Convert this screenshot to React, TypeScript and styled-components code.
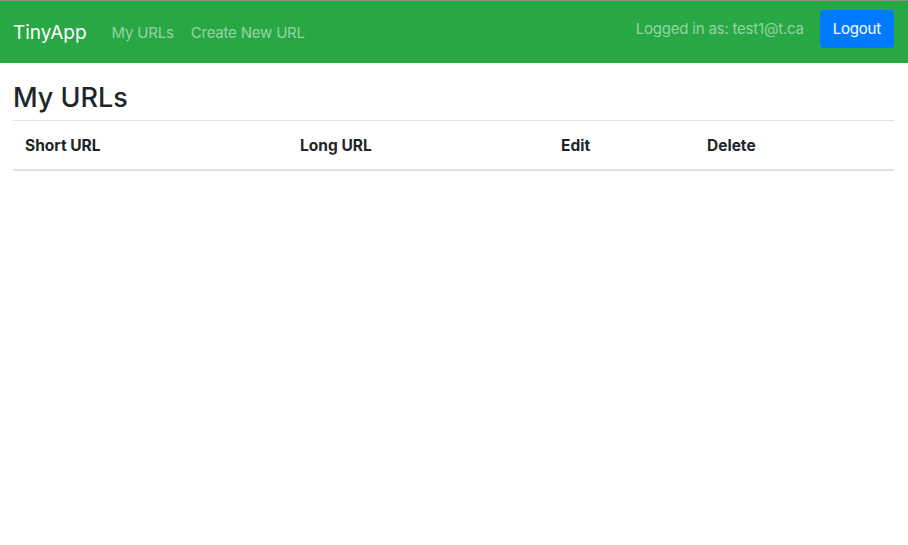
import * as React from "react";
import styled, { createGlobalStyle } from "styled-components";

const GlobalStyle = createGlobalStyle`
  html, body {
    margin: 0;
    padding: 0;
    background: #fff;
  }
  body {
    font-family: Inter, "Liberation Sans", sans-serif;
    color: #212529;
    border-top: 1px solid #8c8c8c;
  }
`;

const Navbar = styled.nav`
  display: flex;
  align-items: center;
  justify-content: space-between;
  height: 62px;
  padding: 0 14px 7px 13px;
  box-sizing: border-box;
  background-color: #28a745;
`;

const Left = styled.div`
  display: flex;
  align-items: center;
  gap: 17px;
  padding-top: 7px;
`;

const Brand = styled.a`
  color: #fff;
  font-size: 19px;
  margin-right: 8px;
  text-decoration: none;
`;

const NavLink = styled.a`
  color: rgba(255, 255, 255, 0.5);
  font-size: 15px;
  letter-spacing: -0.2px;
  text-decoration: none;
`;

const Right = styled.div`
  display: flex;
  align-items: center;
  gap: 16px;
`;

const NavText = styled.span`
  color: rgba(255, 255, 255, 0.5);
  font-size: 15px;
  letter-spacing: -0.2px;
`;

const Button = styled.button`
  height: 38px;
  padding: 0 13px;
  border: none;
  border-radius: 4px;
  background-color: #007bff;
  color: #fff;
  font-family: inherit;
  font-size: 15px;
  letter-spacing: -0.2px;
`;

const Main = styled.main`
  padding: 18px 14px 0 13px;
`;

const Heading = styled.h3`
  margin: 0 0 5px;
  font-size: 27px;
  font-weight: 500;
  line-height: 34px;
`;

const Table = styled.table`
  width: 100%;
  border-collapse: collapse;
`;

const Th = styled.th<{ $width: number }>`
  width: ${({ $width }) => $width}px;
  padding: 1px 12px 0;
  height: 49px;
  text-align: left;
  font-size: 15.5px;
  font-weight: 700;
  border-top: 1px solid #dee2e6;
  border-bottom: 2px solid #dee2e6;
  box-sizing: border-box;
`;

const columns = [
  { label: "Short URL", width: 275 },
  { label: "Long URL", width: 261 },
  { label: "Edit", width: 146 },
  { label: "Delete", width: 199 },
];

export default function App() {
  return (
    <>
      <GlobalStyle />
      <Navbar>
        <Left>
          <Brand href="#">TinyApp</Brand>
          <NavLink href="#">My URLs</NavLink>
          <NavLink href="#">Create New URL</NavLink>
        </Left>
        <Right>
          <NavText>Logged in as: test1@t.ca</NavText>
          <Button>Logout</Button>
        </Right>
      </Navbar>
      <Main>
        <Heading>My URLs</Heading>
        <Table>
          <thead>
            <tr>
              {columns.map((c) => (
                <Th key={c.label} $width={c.width}>
                  {c.label}
                </Th>
              ))}
            </tr>
          </thead>
          <tbody />
        </Table>
      </Main>
    </>
  );
}
